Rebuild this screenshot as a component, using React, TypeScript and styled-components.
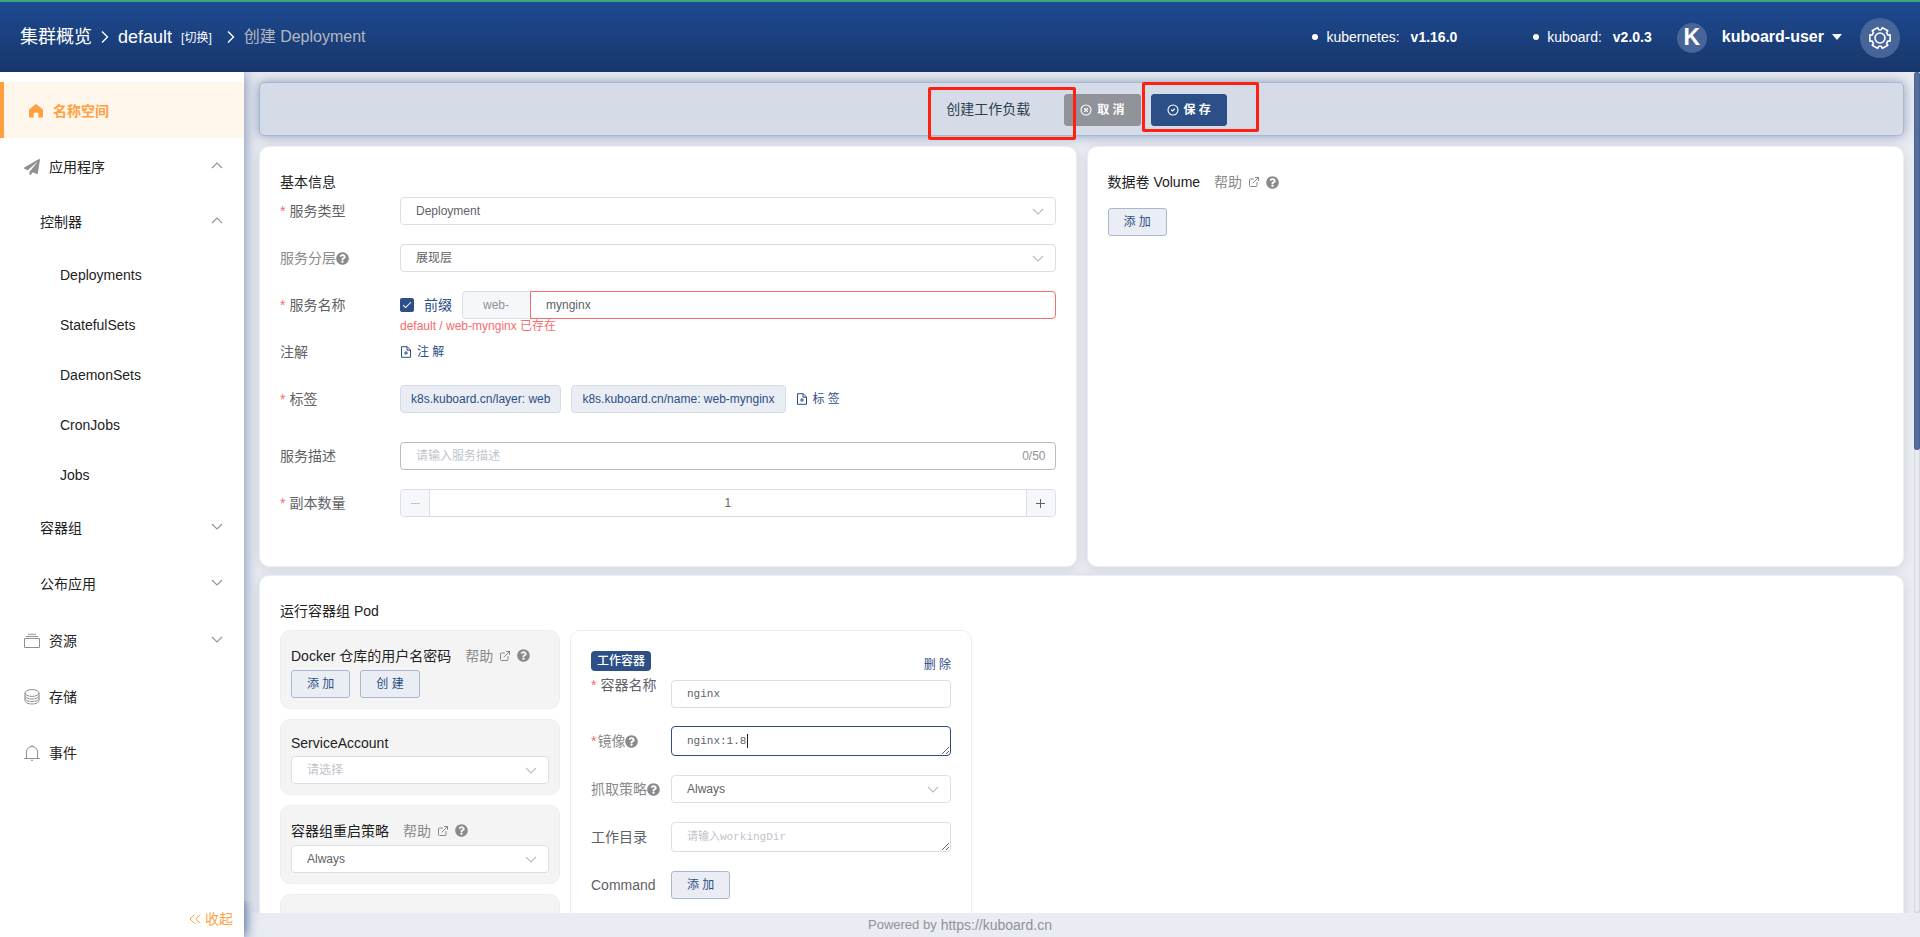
import React from "react";
import styled, { createGlobalStyle, css } from "styled-components";
import { ChevronsLeft, CircleCheck, CircleX, ExternalLink } from "lucide-react";
import { FaPaperPlane, FaQuestionCircle } from "react-icons/fa";

const color = {
  navy: "#2c4f87",
  orange: "#ff9f3f",
  page: "#e9ecf2",
  line: "#dcdfe6",
  softLine: "#ebeef5",
  text: "#606266",
  muted: "#8a8a8a",
  hint: "#c0c4cc",
  ink: "#222222",
  error: "#f56c6c",
};

const GlobalStyle = createGlobalStyle`
  *, *::before, *::after { box-sizing: border-box; }
  html, body { margin: 0; }
  body {
    background: ${color.page};
    color: ${color.ink};
    font-family: "Liberation Sans", "Noto Sans CJK SC", sans-serif;
    font-size: 14px;
    line-height: 20px;
  }
  button, input, select, textarea { font: inherit; color: inherit; margin: 0; }
  button { cursor: pointer; }
  a { color: inherit; text-decoration: none; }
  ul { list-style: none; margin: 0; padding: 0; }
  svg { display: block; flex: none; }
`;

/* ---------- frame ---------- */

const Page = styled.div`
  display: flex;
  flex-direction: column;
  height: 100vh;
`;

const Header = styled.header`
  display: flex;
  align-items: center;
  flex: none;
  height: 72px;
  padding: 0 20px;
  border-top: 2px solid #36a97c;
  background: linear-gradient(#1d4a91, #18366b);
  color: #ffffff;
  position: relative;
  z-index: 3;
`;

const Crumbs = styled.nav`
  display: flex;
  align-items: center;
  flex: 1;
  font-size: 18px;
`;

const CrumbSwitch = styled.a`
  margin: 2px 6px 0 9px;
  font-size: 12px;
`;

const CrumbCurrent = styled.span`
  font-size: 16px;
  color: #b4b8c0;
`;

const CrumbArrow = styled.svg`
  margin: 0 9px;
`;

const Versions = styled.ul`
  display: flex;
  gap: 76px;
  margin-right: 25px;
`;

const Version = styled.li`
  display: flex;
  align-items: center;
  gap: 8px;
  &::before {
    content: "";
    width: 6px;
    height: 6px;
    border-radius: 50%;
    background: #ffffff;
  }
  strong { margin-left: 3px; }
`;

const UserButton = styled.button`
  display: flex;
  align-items: center;
  gap: 8px;
  padding: 0;
  border: 0;
  background: none;
  color: #ffffff;
  font-size: 16px;
  font-weight: bold;
`;

const Avatar = styled.span`
  width: 30px;
  height: 30px;
  margin: 2px 7px 0 0;
  border-radius: 50%;
  background: #48659a;
  font-size: 23px;
  line-height: 28px;
  text-align: center;
`;

const GearButton = styled.button`
  display: flex;
  align-items: center;
  justify-content: center;
  width: 40px;
  height: 40px;
  margin: 2px 0 0 18px;
  padding: 0;
  border: 0;
  border-radius: 50%;
  background: #48659a;
  color: #ffffff;
`;

const Body = styled.div`
  display: flex;
  flex: 1;
  min-height: 0;
`;

const Sidebar = styled.aside`
  display: flex;
  flex-direction: column;
  flex: none;
  width: 244px;
  padding-top: 10px;
  background: #ffffff;
  box-shadow: 0 0 14px rgba(44, 79, 135, 0.65);
  position: relative;
  z-index: 2;
`;

const Menu = styled.ul`
  flex: 1;
`;

const indent = { top: "24px", group: "40px", leaf: "60px" };

const MenuItem = styled.li<{ $level: keyof typeof indent; $active?: boolean }>`
  > a {
    display: flex;
    align-items: center;
    gap: 9px;
    height: ${(p) => (p.$level === "leaf" ? 50 : 56)}px;
    padding: ${(p) => (p.$level === "top" ? 2 : 0)}px 21px 0 ${(p) => indent[p.$level]};
    ${(p) =>
      p.$active &&
      css`
        border-left: 4px solid ${color.orange};
        background: #fff6ec;
        color: ${color.orange};
        font-weight: bold;
      `}
  }
  > a > svg:last-child:not(:first-child) { margin: 0 0 4px auto; }
`;

const CollapseButton = styled.button`
  display: flex;
  align-items: center;
  justify-content: flex-end;
  height: 36px;
  padding: 0 11px;
  border: 0;
  background: #ffffff;
  color: ${color.orange};
  box-shadow: 0 0 10px rgba(44, 79, 135, 0.6);
  clip-path: inset(0 -14px 0 0);
`;

const Main = styled.div`
  display: flex;
  flex-direction: column;
  flex: 1;
  min-width: 0;
`;

const ScrollFrame = styled.div`
  display: flex;
  flex: 1;
  min-height: 0;
`;

const Scroll = styled.main`
  flex: 1;
  min-width: 0;
  padding: 10px 10px 10px 15px;
  overflow-y: scroll;
  scrollbar-width: none;
`;

const Rail = styled.div`
  flex: none;
  width: 6px;
  border-radius: 3px;
  box-shadow: inset 0 0 2px rgba(0, 0, 0, 0.3);
`;

const Thumb = styled.div`
  height: 45%;
  border-radius: 3px;
  background: #54709f;
  box-shadow: inset 0 0 2px rgba(0, 0, 0, 0.4);
`;

const Footer = styled.footer`
  display: flex;
  align-items: center;
  justify-content: center;
  gap: 4px;
  flex: none;
  height: 24px;
  padding-right: 244px;
  background: ${color.page};
  color: #909399;
  font-size: 13px;
  position: relative;
  z-index: 1;
  a { font-size: 14px; }
`;

/* ---------- toolbar ---------- */

const Toolbar = styled.section`
  display: flex;
  align-items: center;
  justify-content: center;
  height: 54px;
  padding-left: 10px;
  border: 1px solid #a9b8d1;
  border-radius: 5px;
  background: #d5dbe7;
  box-shadow: 0 0 12px rgba(44, 79, 135, 0.5);
  color: #2c3e50;
`;

const Marked = styled.div<{ $before?: number }>`
  position: relative;
  display: flex;
  margin-left: ${(p) => p.$before ?? 0}px;
`;

/* Red annotation frame laid over the part that it points out. */
const Mark = styled.span<{ $inset: string }>`
  position: absolute;
  inset: ${(p) => p.$inset};
  border: 3px solid #ff2012;
  border-radius: 2px;
  pointer-events: none;
  z-index: 1;
`;

const ActionButton = styled.button<{ $fill: string }>`
  display: flex;
  align-items: center;
  gap: 5px;
  height: 32px;
  margin-top: 2px;
  padding: 0 15px;
  border: 1px solid ${(p) => p.$fill};
  border-radius: 3px;
  background: ${(p) => p.$fill};
  color: #ffffff;
  font-size: 12px;
  font-weight: bold;
`;

const ToolbarTitle = styled.h1`
  margin: 0 34px 0 0;
  font-size: 14px;
  font-weight: normal;
`;

/* ---------- cards ---------- */

const Cards = styled.div`
  display: grid;
  grid-template-columns: 1fr 1fr;
  gap: 8px 10px;
  margin-top: 10px;
`;

const Card = styled.section<{ $wide?: boolean }>`
  min-height: ${(p) => (p.$wide ? 1362 : 421)}px;
  padding: 20px;
  border: 1px solid ${color.softLine};
  border-radius: 10px;
  background: #ffffff;
  box-shadow: 0 2px 12px rgba(0, 0, 0, 0.1);
  ${(p) => p.$wide && "grid-column: 1 / -1;"}
`;

const Heading = styled.h2<{ $height?: number }>`
  display: flex;
  align-items: center;
  height: ${(p) => p.$height ?? 30}px;
  margin: 0;
  font-size: 14px;
  font-weight: normal;
`;

const HelpLink = styled.a`
  display: flex;
  align-items: center;
  gap: 6px;
  margin-left: 14px;
  color: ${color.muted};
`;

/* ---------- form parts ---------- */

const Form = styled.form`
  display: flex;
  flex-direction: column;
  gap: 19px;
`;

const Row = styled.div<{ $label: number; $after?: number; $top?: boolean }>`
  display: grid;
  grid-template-columns: ${(p) => p.$label}px minmax(0, 1fr);
  align-items: ${(p) => (p.$top ? "start" : "center")};
  margin-bottom: ${(p) => p.$after ?? 0}px;
`;

const Label = styled.label<{ $required?: boolean; $muted?: boolean }>`
  display: flex;
  align-items: center;
  height: 28px;
  white-space: nowrap;
  color: ${(p) => (p.$muted ? color.muted : color.text)};
  ${(p) =>
    p.$required &&
    css`
      &::before {
        content: "*";
        margin-right: ${p.$muted ? 1 : 4}px;
        color: ${color.error};
      }
    `}
`;

const Field = styled.div<{ $drop?: boolean }>`
  position: relative;
  display: flex;
  align-items: center;
  gap: 10px;
  min-height: 28px;
  margin: ${(p) => (p.$drop ? "9px 0 -1px" : "0")};
`;

const control = css`
  width: 100%;
  padding: 0 15px;
  border: 1px solid ${color.line};
  border-radius: 4px;
  background: #ffffff;
  color: ${color.text};
  font-size: 12px;
  outline: 0;
  &::placeholder { color: ${color.hint}; opacity: 1; }
`;

const TextInput = styled.input<{ $mono?: boolean; $tone?: string }>`
  ${control}
  height: 28px;
  ${(p) => p.$tone && `border-color: ${p.$tone};`}
  ${(p) => p.$mono && 'font-family: "Liberation Mono", "Noto Sans CJK SC", monospace; font-size: 11px;'}
`;

const TextArea = styled.textarea`
  ${control}
  display: block;
  height: 30px;
  padding: 5px 15px;
  font-family: "Liberation Mono", "Noto Sans CJK SC", monospace;
  font-size: 11px;
  line-height: 18px;
  resize: vertical;
  &:focus { border-color: ${color.navy}; }
`;

const SelectBox = styled.div`
  position: relative;
  width: 100%;
  > svg {
    position: absolute;
    right: 12px;
    top: 11px;
    pointer-events: none;
  }
`;

const SelectControl = styled.select<{ $empty?: boolean }>`
  ${control}
  display: block;
  height: 28px;
  appearance: none;
  ${(p) => p.$empty && `color: ${color.hint};`}
`;

const CheckLabel = styled.label`
  display: flex;
  align-items: center;
  gap: 10px;
  flex: none;
  color: ${color.navy};
`;

const CheckBox = styled.input`
  display: grid;
  place-items: center;
  width: 14px;
  height: 14px;
  border-radius: 2px;
  background: ${color.navy};
  appearance: none;
  &:checked::before {
    content: "";
    width: 4px;
    height: 8px;
    margin-bottom: 2px;
    border: solid #ffffff;
    border-width: 0 1px 1px 0;
    transform: rotate(45deg);
  }
`;

const InputGroup = styled.div`
  display: flex;
  flex: 1;
  ${TextInput} { border-radius: 0 4px 4px 0; }
`;

const Prepend = styled.span`
  padding: 0 21px 0 20px;
  border: 1px solid ${color.line};
  border-right: 0;
  border-radius: 4px 0 0 4px;
  background: #f5f7fa;
  color: #909399;
  font-size: 12px;
  line-height: 26px;
`;

const ErrorText = styled.p`
  position: absolute;
  top: 28px;
  left: 0;
  margin: 0;
  color: ${color.error};
  font-size: 12px;
  line-height: 14px;
`;

const Tag = styled.span`
  padding: 0 10px;
  border: 1px solid #d5dbe7;
  border-radius: 4px;
  background: #eaedf3;
  color: ${color.navy};
  font-size: 12px;
  line-height: 26px;
  white-space: nowrap;
`;

const LinkButton = styled.button`
  display: flex;
  align-items: center;
  gap: 5px;
  height: 28px;
  padding: 0;
  border: 0;
  background: none;
  color: ${color.navy};
  font-size: 12px;
`;

const PlainButton = styled.button`
  height: 28px;
  padding: 0 15px;
  border: 1px solid #a9b8d1;
  border-radius: 3px;
  background: #eaedf3;
  color: ${color.navy};
  font-size: 12px;
  line-height: 24px;
`;

const Buttons = styled.div<{ $gapTop?: number }>`
  display: flex;
  gap: 10px;
  margin-top: ${(p) => p.$gapTop ?? 0}px;
`;

const Counter = styled.span`
  position: absolute;
  right: 10px;
  color: #909399;
  font-size: 12px;
`;

const Stepper = styled.div`
  display: flex;
  width: 100%;
  height: 28px;
  border: 1px solid ${color.line};
  border-radius: 4px;
  overflow: hidden;
`;

const StepButton = styled.button<{ $side: "left" | "right" }>`
  display: flex;
  align-items: center;
  justify-content: center;
  flex: none;
  width: 29px;
  padding: 0;
  border: 0 solid ${color.line};
  border-${(p) => (p.$side === "left" ? "right" : "left")}-width: 1px;
  background: #f5f7fa;
  color: ${color.text};
  &:disabled { color: ${color.hint}; }
`;

const StepInput = styled.input`
  flex: 1;
  min-width: 0;
  border: 0;
  outline: 0;
  color: ${color.text};
  font-size: 12px;
  text-align: center;
`;

/* ---------- pod section ---------- */

const PodLayout = styled.div`
  display: grid;
  grid-template-columns: 280px 402px;
  gap: 10px;
  height: calc(100% - 34px);
  margin-top: 4px;
`;

const PodSide = styled.div`
  display: flex;
  flex-direction: column;
  gap: 10px;
`;

const Panel = styled.section`
  min-height: 76px;
  padding: 10px;
  border: 1px solid ${color.softLine};
  border-radius: 10px;
  background: #f4f4f4;
`;

const ContainerPanel = styled.section`
  padding: 20px;
  border: 1px solid ${color.softLine};
  border-radius: 10px;
`;

const ContainerHead = styled.div`
  display: flex;
  align-items: flex-start;
  justify-content: space-between;
  height: 20px;
`;

const Badge = styled.span`
  padding: 0 6px;
  border-radius: 4px;
  background: ${color.navy};
  color: #ffffff;
  font-size: 12px;
  font-weight: 500;
  line-height: 20px;
`;

const Caret = styled.span`
  position: absolute;
  top: 8px;
  left: 76px;
  width: 1px;
  height: 14px;
  background: #222222;
`;

/* ---------- icons ---------- */

const Chevron = ({ up, tone = "#b8bcc4" }: { up?: boolean; tone?: string }) => (
  <svg width="12" height="7" viewBox="0 0 12 7" fill="none" stroke={tone} strokeWidth="1.1">
    <path d={up ? "M1 6 6 1 11 6" : "M1 1 6 6 11 1"} />
  </svg>
);

const Separator = () => (
  <CrumbArrow width="8" height="14" viewBox="0 0 8 14" fill="none" stroke="#fff" strokeWidth="1.4">
    <path d="M1 1.5 6.5 7 1 12.5" />
  </CrumbArrow>
);

const gearPath = (() => {
  const at = (r: number, deg: number) => {
    const a = (deg * Math.PI) / 180;
    return `${(12 + r * Math.cos(a)).toFixed(2)} ${(12 + r * Math.sin(a)).toFixed(2)}`;
  };
  const points: string[] = [];
  for (let k = 0; k < 6; k++) {
    const c = k * 60;
    points.push(at(8.4, c - 21), at(10.6, c - 17), at(10.6, c + 17), at(8.4, c + 21));
  }
  return `M${points.join("L")}Z`;
})();

const Gear = () => (
  <svg width="24" height="24" viewBox="0 0 24 24" fill="none" stroke="currentColor" strokeWidth="1.6" strokeLinejoin="round">
    <path d={gearPath} />
    <circle cx="12" cy="12" r="5" />
  </svg>
);

const HomeIcon = () => (
  <svg width="16" height="16" viewBox="0 0 16 16" fill="currentColor">
    <path d="M8 .9 15 6.6V13.8q0 .7-.7.7H10.4V10.4Q10.4 9.4 8 9.4T5.6 10.4V14.5H1.7Q1 14.5 1 13.8V6.6Z" />
  </svg>
);

const StackIcon = () => (
  <svg width="16" height="16" viewBox="0 0 16 16" fill="none" stroke="#909090">
    <path d="M.5 5.5h15v9H.5zM2 3.5h12M4 1.2h8" />
  </svg>
);

const CoinIcon = () => (
  <svg width="16" height="16" viewBox="0 0 16 16" fill="none" stroke="#909090">
    <ellipse cx="8" cy="4" rx="7" ry="3.4" />
    <path d="M1 4v7.6C1 13.500 4.100 15 8 15s7-1.500 7-3.400V4M1 6.600C1 8.500 4.100 10 8 10s7-1.500 7-3.400M1 9.200c0 1.900 3.100 3.300 7 3.300s7-1.400 7-3.300" />
  </svg>
);

const BellIcon = () => (
  <svg width="16" height="16" viewBox="0 0 16 16" fill="none" stroke="#909090">
    <path d="M.2 13.5h15.6M2.5 13.5V7a5.5 5.5 0 0 1 11 0v6.5M8 1.5V0M7 15.3h2" />
  </svg>
);

const FileAddIcon = () => (
  <svg width="12" height="12" viewBox="0 0 12 12" fill="none" stroke="currentColor" strokeWidth="1">
    <path d="M1.5.7h5.7l3.3 3.3v7.3h-9zM7 .7v3.5h3.5M4 7h4M6 5v4" />
  </svg>
);

const StepIcon = ({ plus }: { plus?: boolean }) => (
  <svg width="9" height="9" viewBox="0 0 9 9" stroke="currentColor">
    <path d={plus ? "M0 4.5h9M4.5 0v9" : "M0 4.5h9"} />
  </svg>
);

const Hint = () => <FaQuestionCircle size={13} color={color.muted} />;

/* ---------- composed parts ---------- */

const Help = () => (
  <HelpLink href="#help">
    帮助
    <ExternalLink size={12} strokeWidth={2} />
    <Hint />
  </HelpLink>
);

const Select = ({ id, value, empty }: { id: string; value: string; empty?: boolean }) => (
  <SelectBox>
    <SelectControl id={id} defaultValue={value} $empty={empty}>
      <option>{value}</option>
    </SelectControl>
    <Chevron />
  </SelectBox>
);

type Entry = {
  text: string;
  level: keyof typeof indent;
  icon?: React.ReactNode;
  fold?: "open" | "closed";
  active?: boolean;
};

const entries: Entry[] = [
  { text: "名称空间", level: "top", icon: <HomeIcon />, active: true },
  { text: "应用程序", level: "top", icon: <FaPaperPlane size={16} color="#909090" />, fold: "open" },
  { text: "控制器", level: "group", fold: "open" },
  { text: "Deployments", level: "leaf" },
  { text: "StatefulSets", level: "leaf" },
  { text: "DaemonSets", level: "leaf" },
  { text: "CronJobs", level: "leaf" },
  { text: "Jobs", level: "leaf" },
  { text: "容器组", level: "group", fold: "closed" },
  { text: "公布应用", level: "group", fold: "closed" },
  { text: "资源", level: "top", icon: <StackIcon />, fold: "closed" },
  { text: "存储", level: "top", icon: <CoinIcon /> },
  { text: "事件", level: "top", icon: <BellIcon /> },
];

const BasicInfo = () => (
  <Card>
    <Heading>基本信息</Heading>
    <Form>
      <Row $label={120}>
        <Label htmlFor="kind" $required>服务类型</Label>
        <Field><Select id="kind" value="Deployment" /></Field>
      </Row>
      <Row $label={120}>
        <Label htmlFor="layer" $muted>服务分层<Hint /></Label>
        <Field><Select id="layer" value="展现层" /></Field>
      </Row>
      <Row $label={120}>
        <Label htmlFor="name" $required>服务名称</Label>
        <Field>
          <CheckLabel>
            <CheckBox type="checkbox" defaultChecked />
            前缀
          </CheckLabel>
          <InputGroup>
            <Prepend>web-</Prepend>
            <TextInput id="name" defaultValue="mynginx" $tone={color.error} />
          </InputGroup>
          <ErrorText>default / web-mynginx 已存在</ErrorText>
        </Field>
      </Row>
      <Row $label={120}>
        <Label as="span">注解</Label>
        <Field>
          <LinkButton type="button"><FileAddIcon />注 解</LinkButton>
        </Field>
      </Row>
      <Row $label={120} $after={10}>
        <Label as="span" $required>标签</Label>
        <Field>
          <Tag>k8s.kuboard.cn/layer: web</Tag>
          <Tag>k8s.kuboard.cn/name: web-mynginx</Tag>
          <LinkButton type="button"><FileAddIcon />标 签</LinkButton>
        </Field>
      </Row>
      <Row $label={120}>
        <Label htmlFor="description">服务描述</Label>
        <Field>
          <TextInput id="description" placeholder="请输入服务描述" $tone="#b9bbbf" />
          <Counter>0/50</Counter>
        </Field>
      </Row>
      <Row $label={120}>
        <Label htmlFor="replicas" $required>副本数量</Label>
        <Field>
          <Stepper>
            <StepButton type="button" $side="left" aria-label="减少" disabled><StepIcon /></StepButton>
            <StepInput id="replicas" defaultValue="1" />
            <StepButton type="button" $side="right" aria-label="增加"><StepIcon plus /></StepButton>
          </Stepper>
        </Field>
      </Row>
    </Form>
  </Card>
);

const WorkContainer = () => (
  <ContainerPanel>
    <ContainerHead>
      <Badge>工作容器</Badge>
      <LinkButton type="button">删 除</LinkButton>
    </ContainerHead>
    <Form>
      <Row $label={80} $top>
        <Label htmlFor="container" $required>容器名称</Label>
        <Field $drop><TextInput id="container" defaultValue="nginx" $mono /></Field>
      </Row>
      <Row $label={80}>
        <Label htmlFor="image" $required $muted>镜像<Hint /></Label>
        <Field>
          <TextArea id="image" rows={1} defaultValue="nginx:1.8" autoFocus />
          <Caret />
        </Field>
      </Row>
      <Row $label={80}>
        <Label htmlFor="pull" $muted>抓取策略<Hint /></Label>
        <Field><Select id="pull" value="Always" /></Field>
      </Row>
      <Row $label={80}>
        <Label htmlFor="workdir">工作目录</Label>
        <Field><TextArea id="workdir" rows={1} placeholder="请输入workingDir" /></Field>
      </Row>
      <Row $label={80}>
        <Label as="span">Command</Label>
        <Field><PlainButton type="button">添 加</PlainButton></Field>
      </Row>
    </Form>
  </ContainerPanel>
);

export default function App() {
  return (
    <Page>
      <GlobalStyle />
      <Header>
        <Crumbs>
          <a href="#clusters">集群概览</a>
          <Separator />
          <a href="#default">default</a>
          <CrumbSwitch href="#switch">[切换]</CrumbSwitch>
          <Separator />
          <CrumbCurrent>创建 Deployment</CrumbCurrent>
        </Crumbs>
        <Versions>
          <Version>kubernetes: <strong>v1.16.0</strong></Version>
          <Version>kuboard: <strong>v2.0.3</strong></Version>
        </Versions>
        <UserButton type="button">
          <Avatar>K</Avatar>
          kuboard-user
          <svg width="10" height="6" viewBox="0 0 10 6" fill="#fff"><path d="M0 0h10L5 6z" /></svg>
        </UserButton>
        <GearButton type="button" aria-label="设置"><Gear /></GearButton>
      </Header>

      <Body>
        <Sidebar>
          <Menu>
            {entries.map((e) => (
              <MenuItem key={e.text} $level={e.level} $active={e.active}>
                <a href={`#${e.text}`}>
                  {e.icon}
                  <span>{e.text}</span>
                  {e.fold && <Chevron up={e.fold === "open"} tone="#909399" />}
                </a>
              </MenuItem>
            ))}
          </Menu>
          <CollapseButton type="button">
            <ChevronsLeft size={20} strokeWidth={1.2} />
            收起
          </CollapseButton>
        </Sidebar>

        <Main>
          <ScrollFrame>
            <Scroll>
              <Toolbar>
                <Marked>
                  <ToolbarTitle>创建工作负载</ToolbarTitle>
                  <Mark $inset="-12px -12px -21px -18px" />
                </Marked>
                <ActionButton type="button" $fill="#909399">
                  <CircleX size={12} strokeWidth={2.2} />取 消
                </ActionButton>
                <Marked $before={10}>
                  <ActionButton type="button" $fill={color.navy}>
                    <CircleCheck size={12} strokeWidth={2.2} />保 存
                  </ActionButton>
                  <Mark $inset="-10px -32px -6px -9px" />
                </Marked>
              </Toolbar>

              <Cards>
                <BasicInfo />
                <Card>
                  <Heading>数据卷 Volume<Help /></Heading>
                  <Buttons $gapTop={11}>
                    <PlainButton type="button">添 加</PlainButton>
                  </Buttons>
                </Card>
                <Card $wide>
                  <Heading>运行容器组 Pod</Heading>
                  <PodLayout>
                    <PodSide>
                      <Panel>
                        <Heading as="h3" $height={29}>Docker 仓库的用户名密码<Help /></Heading>
                        <Buttons>
                          <PlainButton type="button">添 加</PlainButton>
                          <PlainButton type="button">创 建</PlainButton>
                        </Buttons>
                      </Panel>
                      <Panel>
                        <Heading as="h3" $height={26}>
                          <label htmlFor="account">ServiceAccount</label>
                        </Heading>
                        <Select id="account" value="请选择" empty />
                      </Panel>
                      <Panel>
                        <Heading as="h3" $height={29}>
                          <label htmlFor="restart">容器组重启策略</label>
                          <Help />
                        </Heading>
                        <Select id="restart" value="Always" />
                      </Panel>
                      <Panel />
                    </PodSide>
                    <WorkContainer />
                  </PodLayout>
                </Card>
              </Cards>
            </Scroll>
            <Rail>
              <Thumb />
            </Rail>
          </ScrollFrame>
          <Footer>
            <span>Powered by</span>
            <a href="https://kuboard.cn">https://kuboard.cn</a>
          </Footer>
        </Main>
      </Body>
    </Page>
  );
}
